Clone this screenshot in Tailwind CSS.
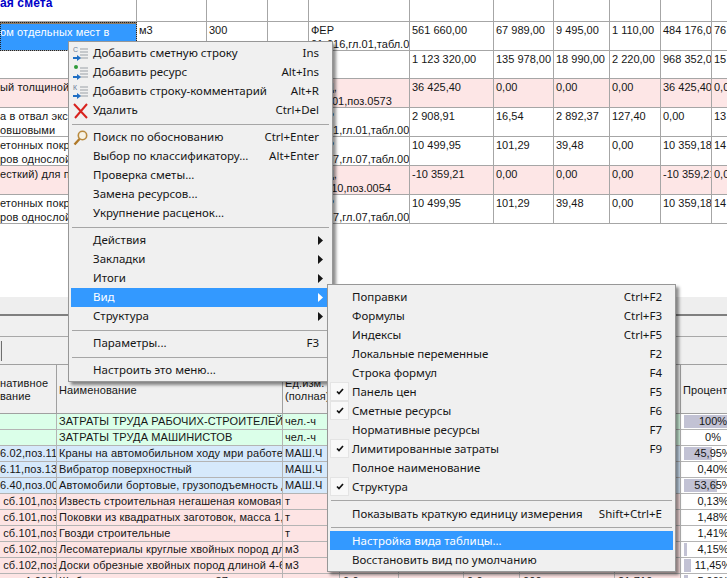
<!DOCTYPE html>
<html lang="ru">
  <head>
    <meta charset="UTF-8" />
    <title>Смета</title>
    <script src="https://cdn.jsdelivr.net/npm/@tailwindcss/browser@4"></script>
  </head>
  <body class="bg-white">
    <div class="relative w-[727px] h-[578px] overflow-hidden bg-white text-[#161616] font-['Liberation_Sans',sans-serif] text-[11px] tracking-[0.12px] leading-[14px]">

      <!-- Top table -->
      <div id="top-table" class="grid grid-cols-[137px_70px_61px_41px_101px_84px_60px_56px_51px_51px_60px] grid-rows-[22px_29px_28px_29px_29px_29px_29px_29px] h-[224px]"></div>

      <div class="h-[73px]"></div>

      <!-- Splitter and tabs -->
      <div class="h-[19px] bg-[#eeeeee] border-b-2 border-[#7f7f7f]"></div>
      <div class="h-[21px] bg-[#f0f0f0] border-b border-[#a8a8a8]"></div>
      <div class="h-[28px] bg-[#f0f0f0] border-b border-[#a0a0a0] pt-[4px]">
        <div class="w-[2px] h-[20px] bg-[#e8e8e8] border-r border-[#6f6f6f]"></div>
      </div>

      <!-- Bottom table -->
      <div id="bottom-table" class="grid grid-cols-[57px_226px_57px_59px_65px_56px_95px_66px_64px] grid-rows-[49px] auto-rows-[16px] w-[745px]"></div>

      <!-- Context menu -->
      <div id="menu-main" class="absolute left-[68px] top-[41px] w-[265px] h-[341px] bg-[#f0f0f0] border border-[#979797] pt-[2px] px-[2px] shadow-[3px_3px_3px_rgba(0,0,0,0.45)] font-['Noto_Sans',sans-serif] text-[11.5px] tracking-normal"></div>

      <!-- Submenu -->
      <div id="menu-view" class="absolute left-[327px] top-[284px] w-[349px] h-[288px] bg-[#f0f0f0] border border-[#979797] pt-[2px] px-[2px] shadow-[3px_3px_3px_rgba(0,0,0,0.45)] font-['Noto_Sans',sans-serif] text-[11.5px] tracking-normal"></div>
    </div>

    <script>
      const topCell = "border-r border-b border-[#a6a6a6] pt-px whitespace-pre overflow-hidden";
      const topRows = [
        ["ая смета", "", "", "", "", "", "", "", "", "", ""],
        ["ом отдельных мест в", "м3", "300", "", "ФЕР\n01-016,гл.01,табл.0012", "561 660,00", "67 989,00", "9 495,00", "1 110,00", "484 176,00", "76"],
        ["", "", "", "", "", "1 123 320,00", "135 978,00", "18 990,00", "2 220,00", "968 352,00", "15"],
        ["ый толщиной", "", "", "", "ТСЦ,\nсб.101,поз.0573", "36 425,40", "0,00", "0,00", "0,00", "36 425,40", "0,0"],
        ["а в отвал экск\nовшовыми", "", "", "", "ФЕР\n01-01,гл.01,табл.0012", "2 908,91", "16,54", "2 892,37", "127,40", "0,00", "13"],
        ["етонных покрыт\nров однослойн", "", "", "", "ФЕР\n27-07,гл.07,табл.0001", "10 499,95", "101,29", "39,48", "0,00", "10 359,18", "14"],
        ["есткий) для по", "", "", "", "ТСЦ,\nсб.110,поз.0054", "-10 359,21", "0,00", "0,00", "0,00", "-10 359,21", "0,0"],
        ["етонных покрыт\nров однослойн", "", "", "", "ФЕР\n27-07,гл.07,табл.0001", "10 499,95", "101,29", "39,48", "0,00", "10 359,18", "14"],
      ];
      const pinkRows = [3, 6];

      let html = "";
      topRows.forEach((row, r) => {
        row.forEach((text, c) => {
          let extra = pinkRows.includes(r) ? "bg-[#fde6e6]" : "";
          extra += c == 0 ? " pl-0" : " pl-[2px] tracking-normal";
          if (r == 1 && c == 0) {
            extra += " bg-[#3399ff] text-white border-t-2 border-t-[#8a7a66] outline-1 outline-dotted outline-[#222] -outline-offset-1";
          }
          // the title row is scrolled, its text is cut by the top edge
          const inner = r == 0 && c == 0
            ? `<span class="block -mt-[5px] font-bold text-[#0000c8] text-[12px]">${text}</span>`
            : text;
          html += `<div class="${topCell} ${extra}">${inner}</div>`;
        });
      });
      document.getElementById("top-table").innerHTML = html;

      // bottom table: [obosnovanie, name, unit, percent, bar, row colour]
      const green = "bg-[#dbffe9]", blue = "bg-[#d6e9fb]", pink = "bg-[#fde4e4]";
      const bottomRows = [
        ["", "ЗАТРАТЫ ТРУДА РАБОЧИХ-СТРОИТЕЛЕЙ", "чел.-ч", "100%", 100, green],
        ["", "ЗАТРАТЫ ТРУДА МАШИНИСТОВ", "чел.-ч", "0%", 0, green],
        ["6.02,поз.11", "Краны на автомобильном ходу мри работе на других видах", "МАШ.Ч", "45,95%", 45.95, blue],
        ["6.11,поз.13", "Вибратор поверхностный", "МАШ.Ч", "0,40%", 0, blue],
        ["6.40,поз.00", "Автомобили бортовые, грузоподъемность до 5 т", "МАШ.Ч", "53,65%", 53.65, blue],
        [" сб.101,поз", "Известь строительная негашеная комовая, сорт I", "т", "0,13%", 0, pink],
        [" сб.101,поз", "Поковки из квадратных заготовок, масса 1,8 кг", "т", "1,48%", 0, pink],
        [" сб.101,поз", "Гвозди строительные", "т", "1,41%", 0, pink],
        [" сб.102,поз", "Лесоматериалы круглые хвойных пород для", "м3", "4,15%", 4.15, pink],
        [" сб.102,поз", "Доски обрезные хвойных пород длиной 4-6,5 м", "м3", "11,45%", 11.45, pink],
        ["        1 000", "Щебень из природного камня 87", "т", "5,90%", 5.9, pink],
      ];
      const headCell = "flex items-center pt-[2px] bg-[#f0f0f0] border-r border-b border-[#a0a0a0] whitespace-pre overflow-hidden leading-[13px]";
      const bodyCell = "border-r border-b border-[#b4b4b4] whitespace-pre overflow-hidden";
      let bottom = "";
      ["нативное\nвание", "Наименование", "Ед.изм.\n(полная)", "", "", "", "", "", "Процент"].forEach((text, c) => {
        bottom += `<div class="${headCell} ${c == 0 ? "pl-0" : "pl-[2px]"}">${text}</div>`;
      });
      bottomRows.forEach(([code, name, unit, percent, bar, colour], r) => {
        const last = r == bottomRows.length - 1;
        bottom += `<div class="${bodyCell} ${colour} pl-0">${code}</div>`;
        bottom += `<div class="${bodyCell} ${colour} pl-[2px]">${name}</div>`;
        bottom += `<div class="${bodyCell} ${colour} pl-[2px]">${unit}</div>`;
        ["0,0", "", "0,0", "000", "21 710"].forEach((text) => {
          bottom += `<div class="${bodyCell} ${colour} pl-[3px]">${last ? text : ""}</div>`;
        });
        bottom += `<div class="relative border-b border-[#b4b4b4] text-center tracking-normal">
          <div class="absolute left-[3px] top-px bottom-px bg-[#c2c2d4]" style="width:${bar * 0.61}px"></div>
          <span class="relative">${percent}</span>
        </div>`;
      });
      document.getElementById("bottom-table").innerHTML = bottom;

      const lines = '<path d="M8 4h8M8 7h8M8 10h8M8 13h8" stroke="#9aa0a6" stroke-width="1"/>';
      const arrow = '<path d="M1 13h5" stroke="#1f6fc4" stroke-width="2"/><path d="M5 10l4 3-4 3z" fill="#1f6fc4"/>';
      const icons = {
        smeta: `<svg width="18" height="18" viewBox="0 0 18 18">${lines}${arrow}<text x="1" y="7" font-size="7" fill="#6f7f9a" font-family="Liberation Sans">С</text></svg>`,
        res: `<svg width="18" height="18" viewBox="0 0 18 18">${lines}${arrow}<circle cx="4" cy="3" r="2" fill="#2e9a3a"/></svg>`,
        comment: `<svg width="18" height="18" viewBox="0 0 18 18">${lines}${arrow}<text x="1" y="7" font-size="7" fill="#6f7f9a" font-family="Liberation Sans">К</text></svg>`,
        del: '<svg width="18" height="18" viewBox="0 0 18 18"><path d="M2 2l13 14M15 2L3 16" stroke="#d8231f" stroke-width="2"/></svg>',
        find: '<svg width="18" height="18" viewBox="0 0 18 18"><circle cx="10.5" cy="6.5" r="4.2" fill="#f7f2e4" stroke="#b98a3e" stroke-width="1.6"/><path d="M7.5 10L2.5 15.5" stroke="#b07a2a" stroke-width="2.4"/></svg>',
      };
      const arrowRight = '<svg class="absolute right-[7px] top-[5px]" width="5" height="9" viewBox="0 0 5 9"><path d="M0 0l5 4.5L0 9z" fill="currentColor"/></svg>';
      const check = '<svg width="8" height="7" viewBox="0 0 8 7"><path d="M1 3.5l2 2L7 1" fill="none" stroke="#111" stroke-width="1.7"/></svg>';

      function renderMenu(id, items, rowClass) {
        document.getElementById(id).innerHTML = items.map((item) => {
          if (item == "-") return '<div class="h-[8px] flex items-center px-[1px]"><div class="h-px w-full bg-[#a6a6a6]"></div></div>';
          const { t, k, icon, sub, on, active } = item;
          let lead = "";
          if (icon) lead = `<div class="absolute left-[1px] top-0 h-[19px] flex items-center">${icons[icon]}</div>`;
          if (on) lead = `<div class="absolute left-0 top-0 w-[19px] h-[19px] bg-[#f8f8f8] border border-[#e4e4e4] flex items-center justify-center">${check}</div>`;
          return `<div class="relative h-[19px] ${rowClass} flex items-center justify-between pl-[22px] pr-[11px] whitespace-nowrap ${active ? "bg-[#3399ff] text-white" : ""}">
            ${lead}<span>${t}</span><span>${k || ""}</span>${sub ? arrowRight : ""}
          </div>`;
        }).join("");
      }

      renderMenu("menu-main", [
        { t: "Добавить сметную строку", k: "Ins", icon: "smeta" },
        { t: "Добавить ресурс", k: "Alt+Ins", icon: "res" },
        { t: "Добавить строку-комментарий", k: "Alt+R", icon: "comment" },
        { t: "Удалить", k: "Ctrl+Del", icon: "del" },
        "-",
        { t: "Поиск по обоснованию", k: "Ctrl+Enter", icon: "find" },
        { t: "Выбор по классификатору...", k: "Alt+Enter" },
        { t: "Проверка сметы..." },
        { t: "Замена ресурсов..." },
        { t: "Укрупнение расценок..." },
        "-",
        { t: "Действия", sub: true },
        { t: "Закладки", sub: true },
        { t: "Итоги", sub: true },
        { t: "Вид", sub: true, active: true },
        { t: "Структура", sub: true },
        "-",
        { t: "Параметры...", k: "F3" },
        "-",
        { t: "Настроить это меню..." },
      ], "pb-px");

      renderMenu("menu-view", [
        { t: "Поправки", k: "Ctrl+F2" },
        { t: "Формулы", k: "Ctrl+F3" },
        { t: "Индексы", k: "Ctrl+F5" },
        { t: "Локальные переменные", k: "F2" },
        { t: "Строка формул", k: "F4" },
        { t: "Панель цен", k: "F5", on: true },
        { t: "Сметные ресурсы", k: "F6", on: true },
        { t: "Нормативные ресурсы", k: "F7" },
        { t: "Лимитированные затраты", k: "F9", on: true },
        { t: "Полное наименование" },
        { t: "Структура", on: true },
        "-",
        { t: "Показывать краткую единицу измерения", k: "Shift+Ctrl+E" },
        "-",
        { t: "Настройка вида таблицы...", active: true },
        { t: "Восстановить вид по умолчанию" },
      ], "pt-px");
    </script>
  </body>
</html>
